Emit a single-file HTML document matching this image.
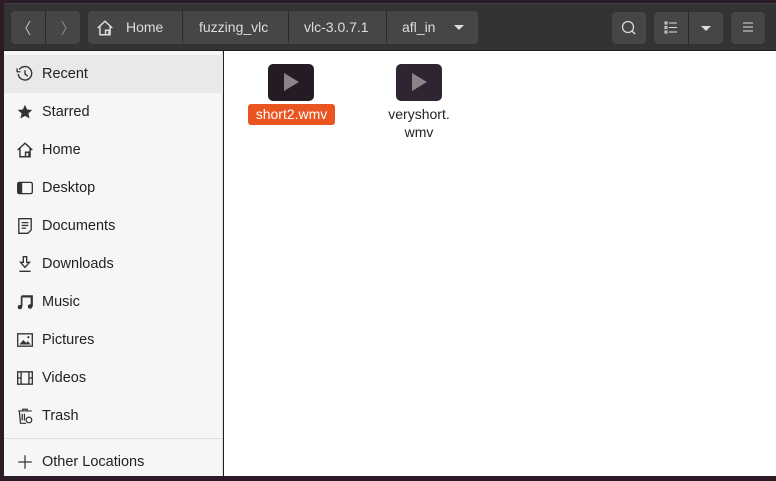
<!DOCTYPE html>
<html><head><style>
*{margin:0;padding:0;box-sizing:border-box}
body{width:776px;height:476px;overflow:hidden;background:#2c1a26;font-family:"Liberation Sans","DejaVu Sans",sans-serif;position:relative}
.hdr{position:absolute;left:4px;top:3px;width:772px;height:48px;background:#333;border-top:1px solid #3c3c3c;border-bottom:1px solid #1e1e1e}
.btn{position:absolute;background:#464646;border-radius:4px;color:#ddd}
.side{position:absolute;left:4px;top:51px;width:219px;height:425px;background:#f6f6f6;border-right:1px solid #ddd}
.main{position:absolute;left:224px;top:51px;width:552px;height:425px;background:#fff}
.it{position:absolute;left:0;width:219px;height:38px;font-size:14.5px;color:#222;line-height:38px;padding-left:38px}
.it svg{position:absolute;left:12px;top:10px}
.crumb{position:absolute;top:0;height:32px;line-height:32px;color:#ddd;font-size:14px}
.sep{position:absolute;top:0;width:1px;height:32px;background:#2a2a2a}
.fi{position:absolute;width:46px;height:37px;border-radius:5px;background:#251b25}
.fi:after{content:"";position:absolute;left:16px;top:9px;border-left:15px solid #8a8488;border-top:9px solid transparent;border-bottom:9px solid transparent}
</style></head><body>
<div class="hdr">
 <div class="btn" style="left:7px;top:7px;width:69px;height:33px">
  <div class="sep" style="left:34px;top:0;height:33px"></div>
  <svg style="position:absolute;left:12px;top:9px" width="10" height="16" viewBox="0 0 10 16"><path d="M7 1 3 8l4 7" fill="none" stroke="#bbb" stroke-width="1.1"/></svg>
  <svg style="position:absolute;left:48px;top:9px" width="10" height="16" viewBox="0 0 10 16"><path d="M3 1l4 7-4 7" fill="none" stroke="#888" stroke-width="1.1"/></svg>
 </div>
 <div class="btn" style="left:84px;top:7px;width:390px;height:33px">
  <svg style="position:absolute;left:8px;top:8px" width="18" height="18" viewBox="0 0 16 16"><path d="M1.5 8 8 2l6.5 6M3.5 6.5V14h9V6.5M8.5 14V10h3v4" fill="none" stroke="#ddd" stroke-width="1.3"/></svg>
  <div class="crumb" style="left:38px">Home</div>
  <div class="sep" style="left:94px"></div>
  <div class="crumb" style="left:111px">fuzzing_vlc</div>
  <div class="sep" style="left:200px"></div>
  <div class="crumb" style="left:216px">vlc-3.0.7.1</div>
  <div class="sep" style="left:298px"></div>
  <div class="crumb" style="left:314px">afl_in</div>
  <div style="position:absolute;left:366px;top:14px;border-top:5px solid #ddd;border-left:5px solid transparent;border-right:5px solid transparent"></div>
 </div>
 <div class="btn" style="left:608px;top:8px;width:34px;height:32px">
  <svg style="position:absolute;left:9px;top:8px" width="16" height="16" viewBox="0 0 16 16"><circle cx="7" cy="7" r="5.5" fill="none" stroke="#ddd" stroke-width="1.2"/><path d="M10.5 10.5 14 14" stroke="#ddd" stroke-width="1.4"/></svg>
 </div>
 <div class="btn" style="left:650px;top:8px;width:69px;height:32px">
  <div class="sep" style="left:34px;height:32px"></div>
  <svg style="position:absolute;left:10px;top:9px" width="14" height="14" viewBox="0 0 14 14" fill="none" stroke="#ddd"><rect x="1" y="1" width="2" height="2"/><rect x="1" y="5.5" width="2" height="2"/><rect x="1" y="10" width="2" height="2"/><path d="M5 2h8M5 6.5h8M5 11h8"/></svg>
  <div style="position:absolute;left:47px;top:14px;border-top:5px solid #ddd;border-left:5px solid transparent;border-right:5px solid transparent"></div>
 </div>
 <div class="btn" style="left:727px;top:8px;width:34px;height:32px">
  <svg style="position:absolute;left:11px;top:9px" width="12" height="12" viewBox="0 0 12 12" stroke="#ddd"><path d="M1 2h10M1 6h10M1 10h10"/></svg>
 </div>
</div>
<div class="side">
 <div class="it" style="top:4px;background:#e9e9e9"><svg width="18" height="18" viewBox="0 0 16 16" fill="none" stroke="#333" stroke-width="1.2"><path d="M3 4A6 6 0 1 1 2 8"/><path d="M1 3v3h3M8 4.5V8l2.5 2"/></svg>Recent</div>
 <div class="it" style="top:42px"><svg width="18" height="18" viewBox="0 0 16 16"><path d="M8 1.5l1.9 4.3 4.6.4-3.5 3 1.1 4.6L8 11.4l-4.1 2.4 1.1-4.6-3.5-3 4.6-.4z" fill="#333"/></svg>Starred</div>
 <div class="it" style="top:80px"><svg width="18" height="18" viewBox="0 0 16 16"><path d="M1.5 8 8 2l6.5 6M3.5 6.5V14h9V6.5M8.5 14V10h3v4" fill="none" stroke="#333" stroke-width="1.3"/></svg>Home</div>
 <div class="it" style="top:118px"><svg width="18" height="18" viewBox="0 0 16 16"><rect x="1.5" y="3" width="13" height="10" rx="1.5" fill="none" stroke="#333" stroke-width="1.2"/><rect x="1.5" y="3" width="4" height="10" fill="#333"/></svg>Desktop</div>
 <div class="it" style="top:156px"><svg width="18" height="18" viewBox="0 0 16 16" fill="none" stroke="#333" stroke-width="1.2"><path d="M2.5 1.5h11v10l-3 3h-8z M5 5h6M5 7.5h6M5 10h4"/></svg>Documents</div>
 <div class="it" style="top:194px"><svg width="18" height="18" viewBox="0 0 16 16" fill="none" stroke="#333" stroke-width="1.2"><path d="M6.5 1.5h3v5h2.5L8 11 4 6.5h2.5zM3 14.5h10"/></svg>Downloads</div>
 <div class="it" style="top:232px"><svg width="18" height="18" viewBox="0 0 16 16"><path d="M5 3h9v9" fill="none" stroke="#333" stroke-width="2"/><path d="M5 3v9" stroke="#333" stroke-width="1.5"/><circle cx="3.5" cy="12.5" r="2" fill="#333"/><circle cx="12.5" cy="12" r="2" fill="#333"/></svg>Music</div>
 <div class="it" style="top:270px"><svg width="18" height="18" viewBox="0 0 16 16"><rect x="1.5" y="2.5" width="13" height="11" fill="none" stroke="#333" stroke-width="1.2"/><path d="M3 12l3.5-4 2.5 2.5 1.5-1.5 2.5 3z" fill="#333"/><circle cx="11" cy="5.5" r="1" fill="#333"/></svg>Pictures</div>
 <div class="it" style="top:308px"><svg width="18" height="18" viewBox="0 0 16 16" fill="none" stroke="#333" stroke-width="1.2"><rect x="1.5" y="2.5" width="13" height="11"/><path d="M4.5 2.5v11M11.5 2.5v11M1.5 8h3M11.5 8h3"/></svg>Videos</div>
 <div class="it" style="top:346px"><svg width="18" height="18" viewBox="0 0 16 16" fill="none" stroke="#333" stroke-width="1.1"><path d="M2 3.5h12M6 3.5V2h4v1.5M3 4l1 10.5h5M5.5 6v6M7.5 6v6"/><circle cx="11.5" cy="11.5" r="2.5"/></svg>Trash</div>
 <div style="position:absolute;left:0;top:387px;width:219px;height:1px;background:#ddd"></div>
 <div class="it" style="top:392px"><svg width="18" height="18" viewBox="0 0 16 16" stroke="#333" stroke-width="1.1"><path d="M8 2v12M2 8h12"/></svg>Other Locations</div>
</div>
<div class="main">
 <div class="fi" style="left:44px;top:13px"></div>
 <div style="position:absolute;left:24px;top:53px;width:87px;height:21px;background:#e95420;border-radius:3px;color:#fff;font-size:14px;line-height:21px;text-align:center">short2.wmv</div>
 <div class="fi" style="left:172px;top:13px;background:#2f2432"></div>
 <div style="position:absolute;left:150px;top:54px;width:90px;color:#222;font-size:14px;line-height:18px;text-align:center">veryshort.<br>wmv</div>
</div>
</body></html>
